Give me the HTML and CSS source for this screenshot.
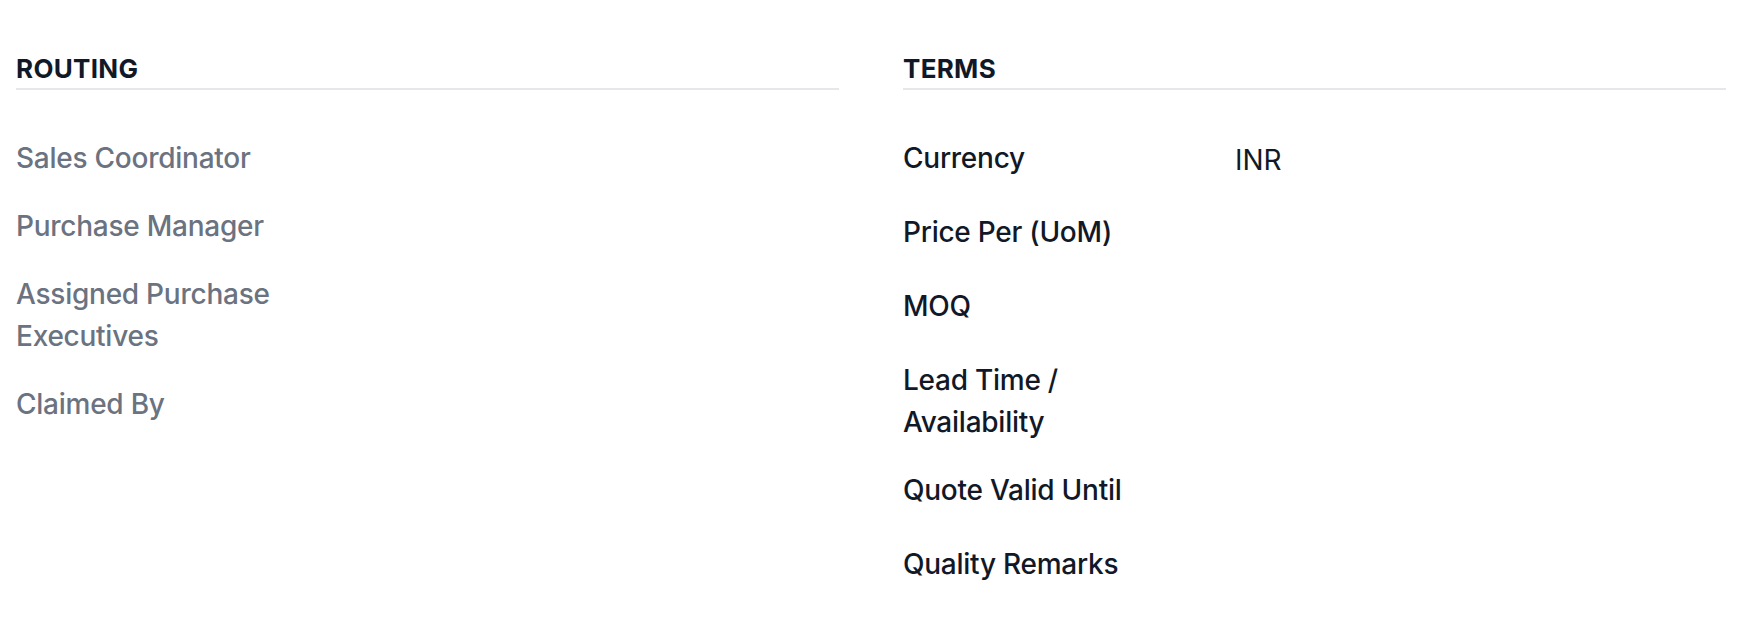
FILE: index.html
```html
<!DOCTYPE html>
<html lang="en">

<head>
    <meta charset="UTF-8">
    <meta name="viewport" content="width=device-width, initial-scale=1.0">
    <title>Enquiry Details</title>
    <link rel="stylesheet" href="styles.css">
</head>

<body>
    <div class="container">
        <section class="panel routing">
            <h2>Routing</h2>
            <dl class="fields">
                <div class="field">
                    <dt>Sales Coordinator</dt>
                    <dd></dd>
                </div>
                <div class="field">
                    <dt>Purchase Manager</dt>
                    <dd></dd>
                </div>
                <div class="field">
                    <dt>Assigned Purchase Executives</dt>
                    <dd></dd>
                </div>
                <div class="field">
                    <dt>Claimed By</dt>
                    <dd></dd>
                </div>
            </dl>
        </section>

        <section class="panel terms">
            <h2>Terms</h2>
            <dl class="fields">
                <div class="field">
                    <dt>Currency</dt>
                    <dd>INR</dd>
                </div>
                <div class="field">
                    <dt>Price Per (UoM)</dt>
                    <dd></dd>
                </div>
                <div class="field">
                    <dt>MOQ</dt>
                    <dd></dd>
                </div>
                <div class="field">
                    <dt>Lead Time / Availability</dt>
                    <dd></dd>
                </div>
                <div class="field">
                    <dt>Quote Valid Until</dt>
                    <dd></dd>
                </div>
                <div class="field">
                    <dt>Quality Remarks</dt>
                    <dd></dd>
                </div>
            </dl>
        </section>
    </div>
</body>

</html>
```

FILE: styles.css
```css
* {
    margin: 0;
    padding: 0;
    box-sizing: border-box;
}

body {
    font-family: 'Inter', 'Noto Sans', sans-serif;
    background: white;
    color: #111827;
    font-size: 28px;
    line-height: 42px;
}

.container {
    display: grid;
    grid-template-columns: 1fr 1fr;
    gap: 64px;
    padding: 52px 30px 0 16px;
}

.panel h2 {
    font-size: 26px;
    line-height: 34px;
    font-weight: 700;
    letter-spacing: 0.3px;
    text-transform: uppercase;
    color: #111827;
    padding-bottom: 2px;
    border-bottom: 2px solid #e5e7eb;
}

.fields {
    display: flex;
    flex-direction: column;
    gap: 26px;
    margin-top: 47px;
}

.field {
    display: grid;
    grid-template-columns: 290px 1fr;
    gap: 42px;
}

dt {
    font-weight: 500;
    letter-spacing: -0.25px;
}

.routing dt {
    color: #6b7280;
}

.terms dt {
    color: #111827;
}

.terms dd {
    min-height: 48px;
    padding-top: 2px;
    color: #111827;
}
```
